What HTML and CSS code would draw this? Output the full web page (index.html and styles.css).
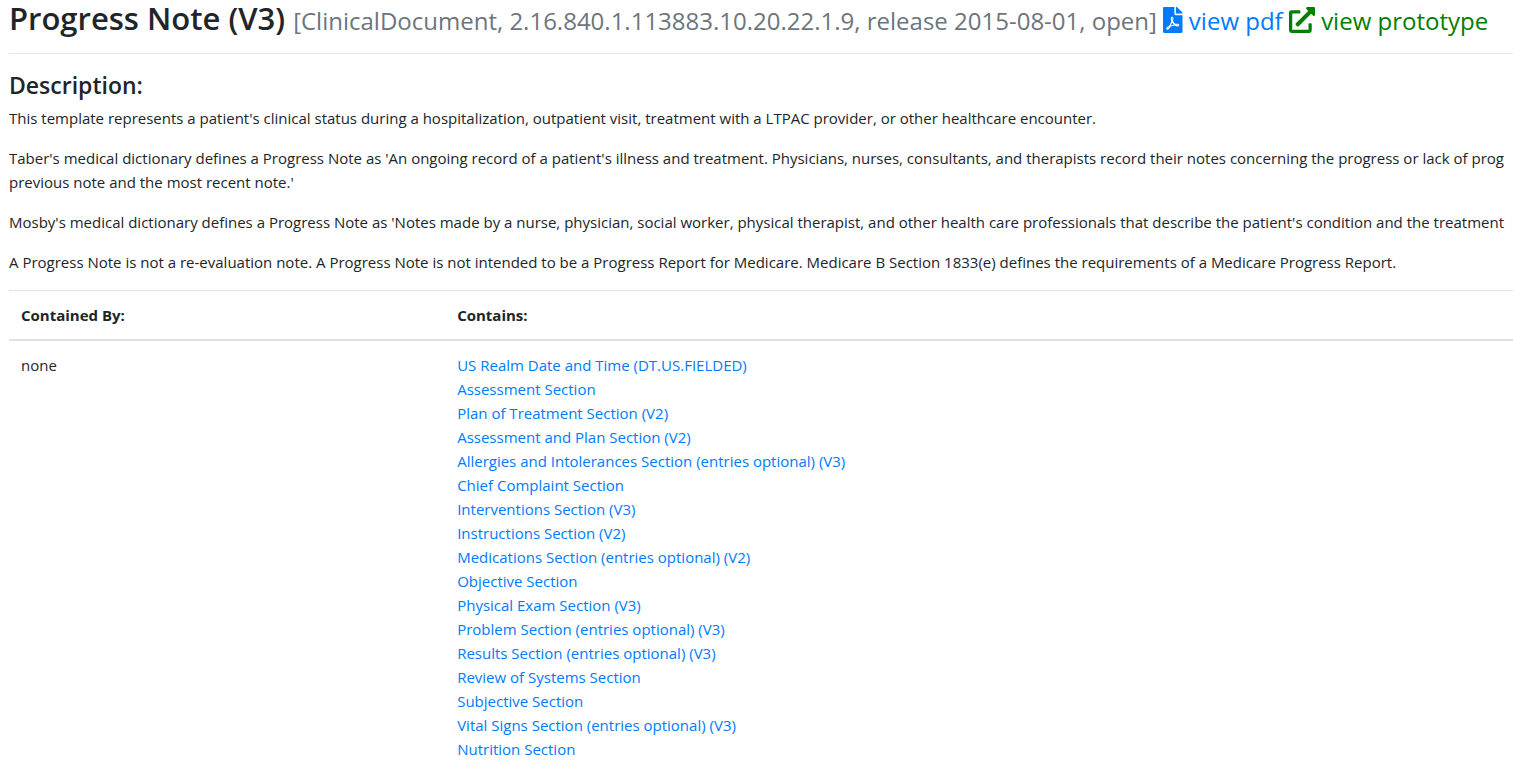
FILE: index.html
```html
<!DOCTYPE html>
<html lang="en">
<head>
    <meta charset="UTF-8">
    <meta name="viewport" content="width=device-width, initial-scale=1.0">
    <title>Progress Note (V3)</title>
    <link rel="stylesheet" href="styles.css">
</head>
<body>
    <div class="template">
        <h2>
            Progress Note (V3)
            <small>
                <span class="text-muted">[ClinicalDocument, 2.16.840.1.113883.10.20.22.1.9, release 2015-08-01, open]</span>
                <a href="#"><svg class="icon" viewBox="0 0 384 512" aria-hidden="true"><path d="M181.900 256.100c-5-16-4.900-46.900-2-46.900 8.400 0 7.600 36.900 2 46.900zm-1.700 47.200c-7.700 20.200-17.300 43.300-28.400 62.700 18.300-7 39-17.200 62.900-21.900-12.700-9.600-24.900-23.400-34.500-40.800zM86.100 428.100c0 .8 13.200-5.400 34.900-40.200-6.700 6.300-29.100 24.500-34.900 40.200zM248 160h136v328c0 13.300-10.700 24-24 24H24c-13.300 0-24-10.700-24-24V24C0 10.700 10.700 0 24 0h200v136c0 13.200 10.800 24 24 24zm-8 171.800c-20-12.200-33.300-29-42.700-53.800 4.500-18.500 11.600-46.600 6.200-64.200-4.700-29.400-42.400-26.500-47.800-6.800-5 18.300-.4 44.100 8.100 77-11.600 27.600-28.700 64.600-40.800 85.800-.1 0-.1.1-.2.1-27.100 13.900-73.600 44.500-54.500 68 5.600 6.900 16 10 21.500 10 17.900 0 35.700-18 61.100-61.800 25.800-8.500 54.100-19.100 79-23.200 21.700 11.800 47.100 19.500 64 19.500 29.200 0 31.200-32 19.700-43.400-13.900-13.600-54.300-9.700-73.600-7.200zM377 105L279 7c-4.500-4.500-10.600-7-17-7h-6v128h128v-6.100c0-6.300-2.500-12.400-7-16.900zm-74.100 255.300c4.100-2.700-2.500-11.900-42.800-9 37.100 15.800 42.800 9 42.800 9z"/></svg> view pdf</a>
                <a href="#" class="prototype"><svg class="icon" viewBox="0 0 512 512" aria-hidden="true"><path d="M432 320h-32a16 16 0 0 0-16 16v112H64V128h144a16 16 0 0 0 16-16V80a16 16 0 0 0-16-16H48a48 48 0 0 0-48 48v352a48 48 0 0 0 48 48h352a48 48 0 0 0 48-48V336a16 16 0 0 0-16-16zM488 0H360c-21.370 0-32.050 25.910-17 41l35.730 35.730L135 320.370a24 24 0 0 0 0 34L157.670 377a24 24 0 0 0 34 0l243.610-243.680L471 169c15 15 41 4.500 41-17V24a24 24 0 0 0-24-24z"/></svg> view prototype</a>
            </small>
        </h2>
        <hr>

        <h4>Description:</h4>
        <p>This template represents a patient's clinical status during a hospitalization, outpatient visit, treatment with a LTPAC provider, or other healthcare encounter.</p>
        <p>Taber's medical dictionary defines a Progress Note as 'An ongoing record of a patient's illness and treatment. Physicians, nurses, consultants, and therapists record their notes concerning the progress or lack of prog<br>previous note and the most recent note.'</p>
        <p>Mosby's medical dictionary defines a Progress Note as 'Notes made by a nurse, physician, social worker, physical therapist, and other health care professionals that describe the patient's condition and the treatment</p>
        <p>A Progress Note is not a re-evaluation note. A Progress Note is not intended to be a Progress Report for Medicare. Medicare B Section 1833(e) defines the requirements of a Medicare Progress Report.</p>

        <table class="table">
            <thead>
                <tr>
                    <th class="contained-by">Contained By:</th>
                    <th>Contains:</th>
                </tr>
            </thead>
            <tbody>
                <tr>
                    <td>none</td>
                    <td>
                        <ul>
                            <li><a href="#">US Realm Date and Time (DT.US.FIELDED)</a></li>
                            <li><a href="#">Assessment Section</a></li>
                            <li><a href="#">Plan of Treatment Section (V2)</a></li>
                            <li><a href="#">Assessment and Plan Section (V2)</a></li>
                            <li><a href="#">Allergies and Intolerances Section (entries optional) (V3)</a></li>
                            <li><a href="#">Chief Complaint Section</a></li>
                            <li><a href="#">Interventions Section (V3)</a></li>
                            <li><a href="#">Instructions Section (V2)</a></li>
                            <li><a href="#">Medications Section (entries optional) (V2)</a></li>
                            <li><a href="#">Objective Section</a></li>
                            <li><a href="#">Physical Exam Section (V3)</a></li>
                            <li><a href="#">Problem Section (entries optional) (V3)</a></li>
                            <li><a href="#">Results Section (entries optional) (V3)</a></li>
                            <li><a href="#">Review of Systems Section</a></li>
                            <li><a href="#">Subjective Section</a></li>
                            <li><a href="#">Vital Signs Section (entries optional) (V3)</a></li>
                            <li><a href="#">Nutrition Section</a></li>
                        </ul>
                    </td>
                </tr>
            </tbody>
        </table>
    </div>
</body>
</html>
```
FILE: styles.css
```css
* {
    margin: 0;
    padding: 0;
    box-sizing: border-box;
}

body {
    font-family: "Segoe UI", "Open Sans", sans-serif;
    font-size: 15px;
    line-height: 24px;
    color: #212529;
    background: #fff;
}

.template {
    padding-left: 9px;
}

h2 {
    font-size: 31px;
    font-weight: 600;
    line-height: 36px;
    margin-bottom: 14px;
}

small {
    font-size: 24px;
    font-weight: 400;
}

.text-muted {
    color: #6c757d;
}

a {
    color: #007bff;
    text-decoration: none;
}

a:hover {
    text-decoration: underline;
}

.prototype {
    color: green;
}

.icon {
    height: 26px;
    vertical-align: -3px;
    fill: currentColor;
}

hr {
    border: 0;
    border-top: 1px solid rgba(0, 0, 0, 0.1);
    margin-bottom: 17px;
}

h4 {
    font-size: 23px;
    font-weight: 600;
    line-height: 29px;
    margin-bottom: 6px;
}

p {
    margin-bottom: 16px;
}

.table {
    width: 100%;
    border-collapse: separate;
    border-spacing: 0;
}

.table th,
.table td {
    padding: 12px;
    text-align: left;
    vertical-align: top;
}

.table th {
    border-top: 1px solid #dee2e6;
    border-bottom: 2px solid #dee2e6;
    font-weight: 700;
}

.contained-by {
    width: 29%;
}

ul {
    list-style: none;
}
```
